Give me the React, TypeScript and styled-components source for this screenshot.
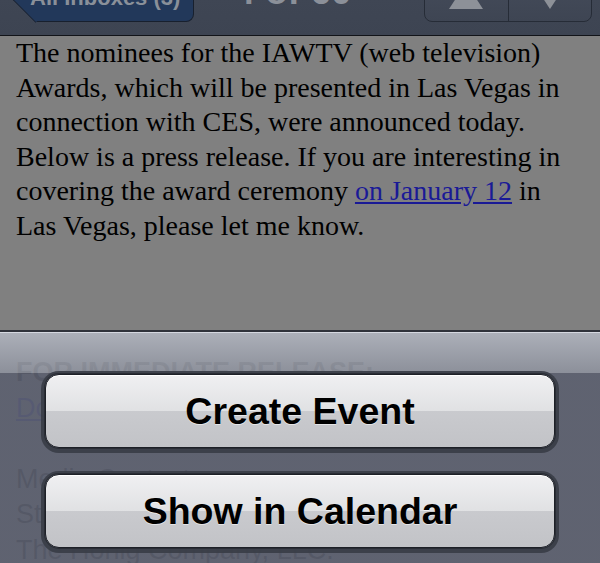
import React from 'react'
import styled, { createGlobalStyle } from 'styled-components'

const GlobalStyle = createGlobalStyle`
  html, body {
    margin: 0;
    padding: 0;
    background: #5c606f;
  }
  * {
    box-sizing: border-box;
  }
`

const App = () => {
  return (
    <Screen>
      <GlobalStyle />
      <NavBar>
        <BackButton>
          <BackLabel>All Inboxes (3)</BackLabel>
        </BackButton>
        <Title>4 of 60</Title>
        <Segmented>
          <Segment>
            <Arrow viewBox="0 0 34 26">
              <polygon points="17,0 34,26 0,26" />
            </Arrow>
          </Segment>
          <Segment divided>
            <Arrow viewBox="0 0 34 26">
              <polygon points="0,0 34,0 17,26" />
            </Arrow>
          </Segment>
        </Segmented>
      </NavBar>

      <Message>
        <Paragraph>
          The nominees for the IAWTV (web television) Awards, which will be presented in Las Vegas in
          connection with CES, were announced today. Below is a press release. If you are interesting in
          covering the award ceremony <Link href="#">on January 12</Link> in Las Vegas, please let me know.
        </Paragraph>
        <PressRelease>
          <Heading>FOR IMMEDIATE RELEASE:</Heading>
          <Line><Link href="#">Download Nominee List</Link></Line>
          <Line>&nbsp;</Line>
          <Line>Media Contact:</Line>
          <Line>Steve Honig</Line>
          <Line>The Honig Company, LLC.</Line>
        </PressRelease>
      </Message>

      <ActionSheet>
        <SheetButton>Create Event</SheetButton>
        <SheetButton>Show in Calendar</SheetButton>
      </ActionSheet>
    </Screen>
  )
}

export default App

const Screen = styled.div`
  position: relative;
  width: 600px;
  height: 563px;
  overflow: hidden;
  background: #808080;
`

const NavBar = styled.header`
  height: 83px;
  margin-top: -47px;
  display: flex;
  align-items: flex-start;
  padding: 9px 8px 0 0;
  background: linear-gradient(#4a5262, #3f4654 55%, #3d4452);
  border-bottom: 1px solid #121419;
`

const BackButton = styled.div`
  position: relative;
  height: 60px;
  margin-left: 35px;
  padding: 10px 13px 0 0;
  background: #22385a;
  border: 1px solid #18202e;
  border-left: none;
  border-radius: 0 8px 8px 0;

  &::before {
    content: '';
    position: absolute;
    left: -21px;
    top: calc(50% - 21px);
    width: 42px;
    height: 42px;
    background: #22385a;
    border-left: 1px solid #18202e;
    border-bottom: 1px solid #18202e;
    border-radius: 0 0 0 4px;
    transform: rotate(45deg);
  }
`

const BackLabel = styled.span`
  position: relative;
  display: block;
  margin-left: -5px;
  font-family: 'Liberation Sans', Arial, sans-serif;
  font-weight: bold;
  font-size: 22px;
  line-height: 50px;
  color: #8a9099;
  white-space: nowrap;
`

const Title = styled.h1`
  margin: 0 0 0 40px;
  font-family: 'Liberation Sans', Arial, sans-serif;
  font-weight: bold;
  font-size: 37px;
  line-height: 60px;
  color: #8b9099;
  white-space: nowrap;
`

const Segmented = styled.div`
  display: flex;
  width: 168px;
  height: 60px;
  margin-left: auto;
  border: 1px solid #262c37;
  border-radius: 8px;
  overflow: hidden;
  background: linear-gradient(#474e5d, #3e4553);
`

const Segment = styled.div<{ divided?: boolean }>`
  flex: 1;
  display: flex;
  justify-content: center;
  align-items: center;
  padding-top: 7px;
  border-left: ${(p) => (p.divided ? '1px solid #262c37' : 'none')};
`

const Arrow = styled.svg`
  width: 34px;
  height: 26px;
  fill: #8d9198;
`

const Message = styled.article`
  padding: 0 20px 0 16px;
  color: #000;
`

const Paragraph = styled.p`
  margin: 0;
  font-family: 'Liberation Serif', 'Times New Roman', serif;
  font-size: 28px;
  line-height: 34.5px;
`

const Link = styled.a`
  color: #1a1a96;
  text-decoration: underline;
`

const PressRelease = styled.div`
  margin-top: 112px;
  font-family: 'Liberation Sans', Arial, sans-serif;
  font-size: 27px;
  line-height: 35.5px;
`

const Line = styled.div`
  white-space: nowrap;
`

const Heading = styled(Line)`
  font-weight: bold;
`

const ActionSheet = styled.div`
  position: absolute;
  left: 0;
  right: 0;
  top: 330px;
  bottom: 0;
  display: flex;
  flex-direction: column;
  gap: 26px;
  padding: 42px 45px 0;
  border-top: 2px solid #2f323a;
  box-shadow: inset 0 1px 0 rgba(215, 218, 226, 0.95);
  background: linear-gradient(
    to bottom,
    rgba(176, 180, 190, 0.92) 0px,
    rgba(141, 145, 156, 0.92) 41px,
    rgba(92, 96, 111, 0.92) 41px,
    rgba(92, 96, 111, 0.92) 100%
  );
`

const SheetButton = styled.button`
  width: 100%;
  height: 74px;
  padding: 0;
  border: 1px solid #1d2027;
  border-radius: 14px;
  background: linear-gradient(#f0f0f2 0%, #e0e1e3 50%, #c9cace 50%, #c2c3c7 100%);
  box-shadow:
    inset 0 1px 0 #ffffff,
    0 0 0 1px #2a2d35,
    0 1px 0 4px rgba(58, 62, 72, 0.95);
  font-family: 'Liberation Sans', Arial, sans-serif;
  font-weight: bold;
  font-size: 37.5px;
  color: #000;
  text-shadow: 0 1px 0 rgba(255, 255, 255, 0.55);
  cursor: pointer;
`
